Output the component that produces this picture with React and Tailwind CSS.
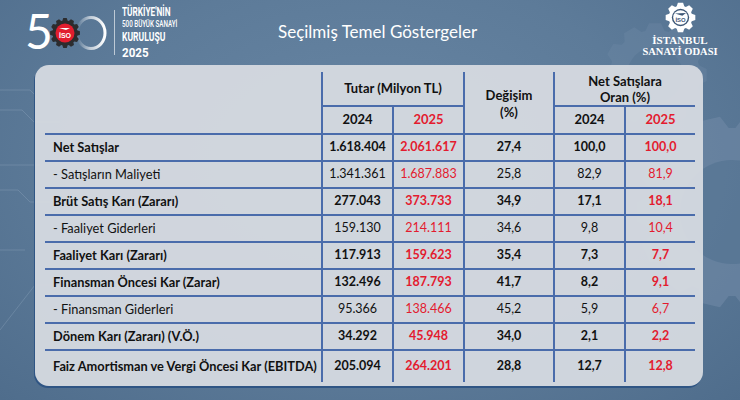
import React from 'react';

const rows = [
  { label: 'Net Satışlar', v: ['1.618.404', '2.061.617', '27,4', '100,0', '100,0'], bold: true },
  { label: '- Satışların Maliyeti', v: ['1.341.361', '1.687.883', '25,8', '82,9', '81,9'] },
  { label: 'Brüt Satış Karı (Zararı)', v: ['277.043', '373.733', '34,9', '17,1', '18,1'], bold: true },
  { label: '- Faaliyet Giderleri', v: ['159.130', '214.111', '34,6', '9,8', '10,4'] },
  { label: 'Faaliyet Karı (Zararı)', v: ['117.913', '159.623', '35,4', '7,3', '7,7'], bold: true },
  { label: 'Finansman Öncesi Kar (Zarar)', v: ['132.496', '187.793', '41,7', '8,2', '9,1'], bold: true },
  { label: '- Finansman Giderleri', v: ['95.366', '138.466', '45,2', '5,9', '6,7'] },
  { label: 'Dönem Karı (Zararı) (V.Ö.)', v: ['34.292', '45.948', '34,0', '2,1', '2,2'], bold: true },
  { label: 'Faiz Amortisman ve Vergi Öncesi Kar (EBITDA)', v: ['205.094', '264.201', '28,8', '12,7', '12,8'], bold: true },
];

// gear outline, teeth around a circle
const gearPath = (cx, cy, ro, ri, teeth) => {
  const pts = [];
  const step = (Math.PI * 2) / teeth;
  for (let i = 0; i < teeth; i++) {
    const a = i * step;
    const t = step * 0.22;
    pts.push([a - step * 0.5 + t * 0.4, ri], [a - t, ro], [a + t, ro], [a + step * 0.5 - t * 0.4, ri]);
  }
  return pts
    .map(([a, r], i) => `${i ? 'L' : 'M'}${(cx + r * Math.cos(a)).toFixed(2)} ${(cy + r * Math.sin(a)).toFixed(2)}`)
    .join(' ') + ' Z';
};

const Gear = ({ size, ro, ri, hole, teeth, className, fill }) => (
  <svg width={size} height={size} viewBox={`0 0 ${size} ${size}`} className={className}>
    <path d={gearPath(size / 2, size / 2, ro, ri, teeth)} fill={fill} />
    {hole && <circle cx={size / 2} cy={size / 2} r={hole} fill="#5b7997" />}
  </svg>
);

const Logo500 = () => (
  <div className="flex items-center w-[230px] pl-[25px] pt-[9px] h-[56px]">
    <span className="text-[48px] font-normal text-white leading-none font-['Lato',sans-serif] -mt-[3px]">5</span>
    <svg width="58" height="40" viewBox="0 0 58 40" className="-ml-[3px]">
      <defs>
        <linearGradient id="ringFade" x1="0" x2="1">
          <stop offset="0" stopColor="#fff" stopOpacity="0" />
          <stop offset="0.45" stopColor="#fff" stopOpacity="0.6" />
          <stop offset="1" stopColor="#fff" stopOpacity="1" />
        </linearGradient>
      </defs>
      <ellipse cx="41" cy="20" rx="14" ry="15.5" fill="none" stroke="url(#ringFade)" strokeWidth="3" />
      <path d={gearPath(15, 20, 15, 12.5, 12)} fill="#2c2c2e" />
      <circle cx="15" cy="20" r="9.5" fill="#e11d2e" />
      <path d="M9 15 L20 15 L16 17 Z" fill="#fff" />
      <text x="15" y="25" textAnchor="middle" fontSize="7" fontWeight="700" fill="#fff" fontFamily="Liberation Sans, sans-serif">İSO</text>
    </svg>
    <div className="w-px h-[45px] bg-white/60 ml-[6px] mr-[7px]" />
    <div className="flex flex-col text-white font-['Roboto',sans-serif] font-bold origin-left scale-x-[0.66] whitespace-nowrap">
      <span className="text-[12.5px] leading-[12px]">TÜRKİYE'NİN</span>
      <span className="text-[9.5px] font-medium leading-[10px] mt-[1px]">500 BÜYÜK SANAYİ</span>
      <span className="text-[13px] leading-[14px] mt-[1px]">KURULUŞU</span>
      <span className="text-[13px] leading-[13px] mt-[2px] scale-x-[1.35] origin-left">2025</span>
    </div>
  </div>
);

const LogoISO = () => (
  <div className="flex flex-col items-center w-[80px] pt-[2px] text-white">
    <svg width="31" height="31" viewBox="0 0 34 34">
      <path d={gearPath(17, 17, 16.5, 13, 8)} fill="#fff" />
      <circle cx="17" cy="17" r="9.5" fill="#3c5675" />
      <circle cx="17" cy="17" r="8" fill="#fff" />
      <path d="M11 12.5 L23 12 L19 15 Z" fill="#3c5675" />
      <text x="17" y="21.5" textAnchor="middle" fontSize="6.5" fontWeight="700" fill="#3c5675" fontFamily="Liberation Sans, sans-serif">İSO</text>
    </svg>
    <span className="font-['Liberation_Serif',serif] font-bold text-[11px] leading-[12px] mt-[1px]">İSTANBUL</span>
    <span className="font-['Liberation_Serif',serif] font-bold text-[10.5px] leading-[12px]">SANAYİ ODASI</span>
  </div>
);

const line = 'border-[#4a6cab]';

export default function App() {
  return (
    <div className="relative w-[740px] h-[400px] overflow-hidden bg-[#5a7896] bg-[radial-gradient(ellipse_at_50%_40%,#6886a4_0%,#5d7b99_55%,#4f6d8c_100%)] font-['Lato',sans-serif]">
      {/* background decoration */}
      <Gear size={200} ro={96} ri={84} hole={52} teeth={14} fill="#7089a6" className="absolute left-[632px] top-[112px] opacity-60" />
      <Gear size={110} ro={52} ri={45} hole={28} teeth={12} fill="#6d88a5" className="absolute left-[600px] top-[20px] opacity-40" />
      <svg width="60" height="300" className="absolute left-0 top-[70px] opacity-25">
        <path d="M0 20 H30 L40 30 M0 40 H22 L34 52 H60 M0 95 H40 M0 120 H18 L30 132 H50 M0 260 L35 215 H60 M0 180 H25" stroke="#a9bdd2" strokeWidth="1" fill="none" />
      </svg>

      <div className="relative flex items-start h-[65px]">
        <Logo500 />
        <div className="flex-1 text-white text-[17px] pt-[19px] pl-[48px]">Seçilmiş Temel Göstergeler</div>
        <div className="mr-[20px]">
          <LogoISO />
        </div>
      </div>

      <div className="relative ml-[35px] w-[668px] h-[321px] rounded-[14px] bg-[#d6dae0]/95 shadow-[-1px_2px_0_#2f5584] pt-[7px] pl-[10px]">
        <div className="grid grid-cols-[276px_71px_71px_90px_71px_71px] grid-rows-[35px_26px_repeat(8,27px)_33px] text-[#111] text-[12.5px]">
          <div className="row-span-2" />
          <div className={`col-span-2 border-l-2 border-b-2 ${line} flex items-center justify-center font-bold text-[13px]`}>Tutar (Milyon TL)</div>
          <div className={`row-span-2 border-l-2 ${line} flex items-center justify-center text-center font-bold text-[13px] leading-[17px] pt-[2px]`}>Değişim<br />(%)</div>
          <div className={`col-span-2 border-l-2 border-b-2 ${line} flex items-center justify-center text-center font-bold text-[13px] leading-[16px]`}>Net Satışlara<br />Oran (%)</div>
          <div className={`border-l-2 ${line} flex items-center justify-center font-bold text-[13px]`}>2024</div>
          <div className={`border-l-2 ${line} flex items-center justify-center font-bold text-[13px] text-[#e31b2f]`}>2025</div>
          <div className={`border-l-2 ${line} flex items-center justify-center font-bold text-[13px]`}>2024</div>
          <div className={`border-l-2 ${line} flex items-center justify-center font-bold text-[13px] text-[#e31b2f]`}>2025</div>
          {rows.map((r) => (
            <React.Fragment key={r.label}>
              <div className={`border-t-2 ${line} flex items-center pl-[8px] text-[12.8px] whitespace-nowrap ${r.bold ? 'font-bold' : ''}`}>{r.label}</div>
              {r.v.map((v, i) => (
                <div
                  key={i}
                  className={`border-t-2 border-l-2 ${line} flex items-center justify-center ${r.bold ? 'font-bold' : ''} ${i === 1 || i === 4 ? 'text-[#e31b2f]' : ''}`}
                >
                  {v}
                </div>
              ))}
            </React.Fragment>
          ))}
        </div>
      </div>
    </div>
  );
}
